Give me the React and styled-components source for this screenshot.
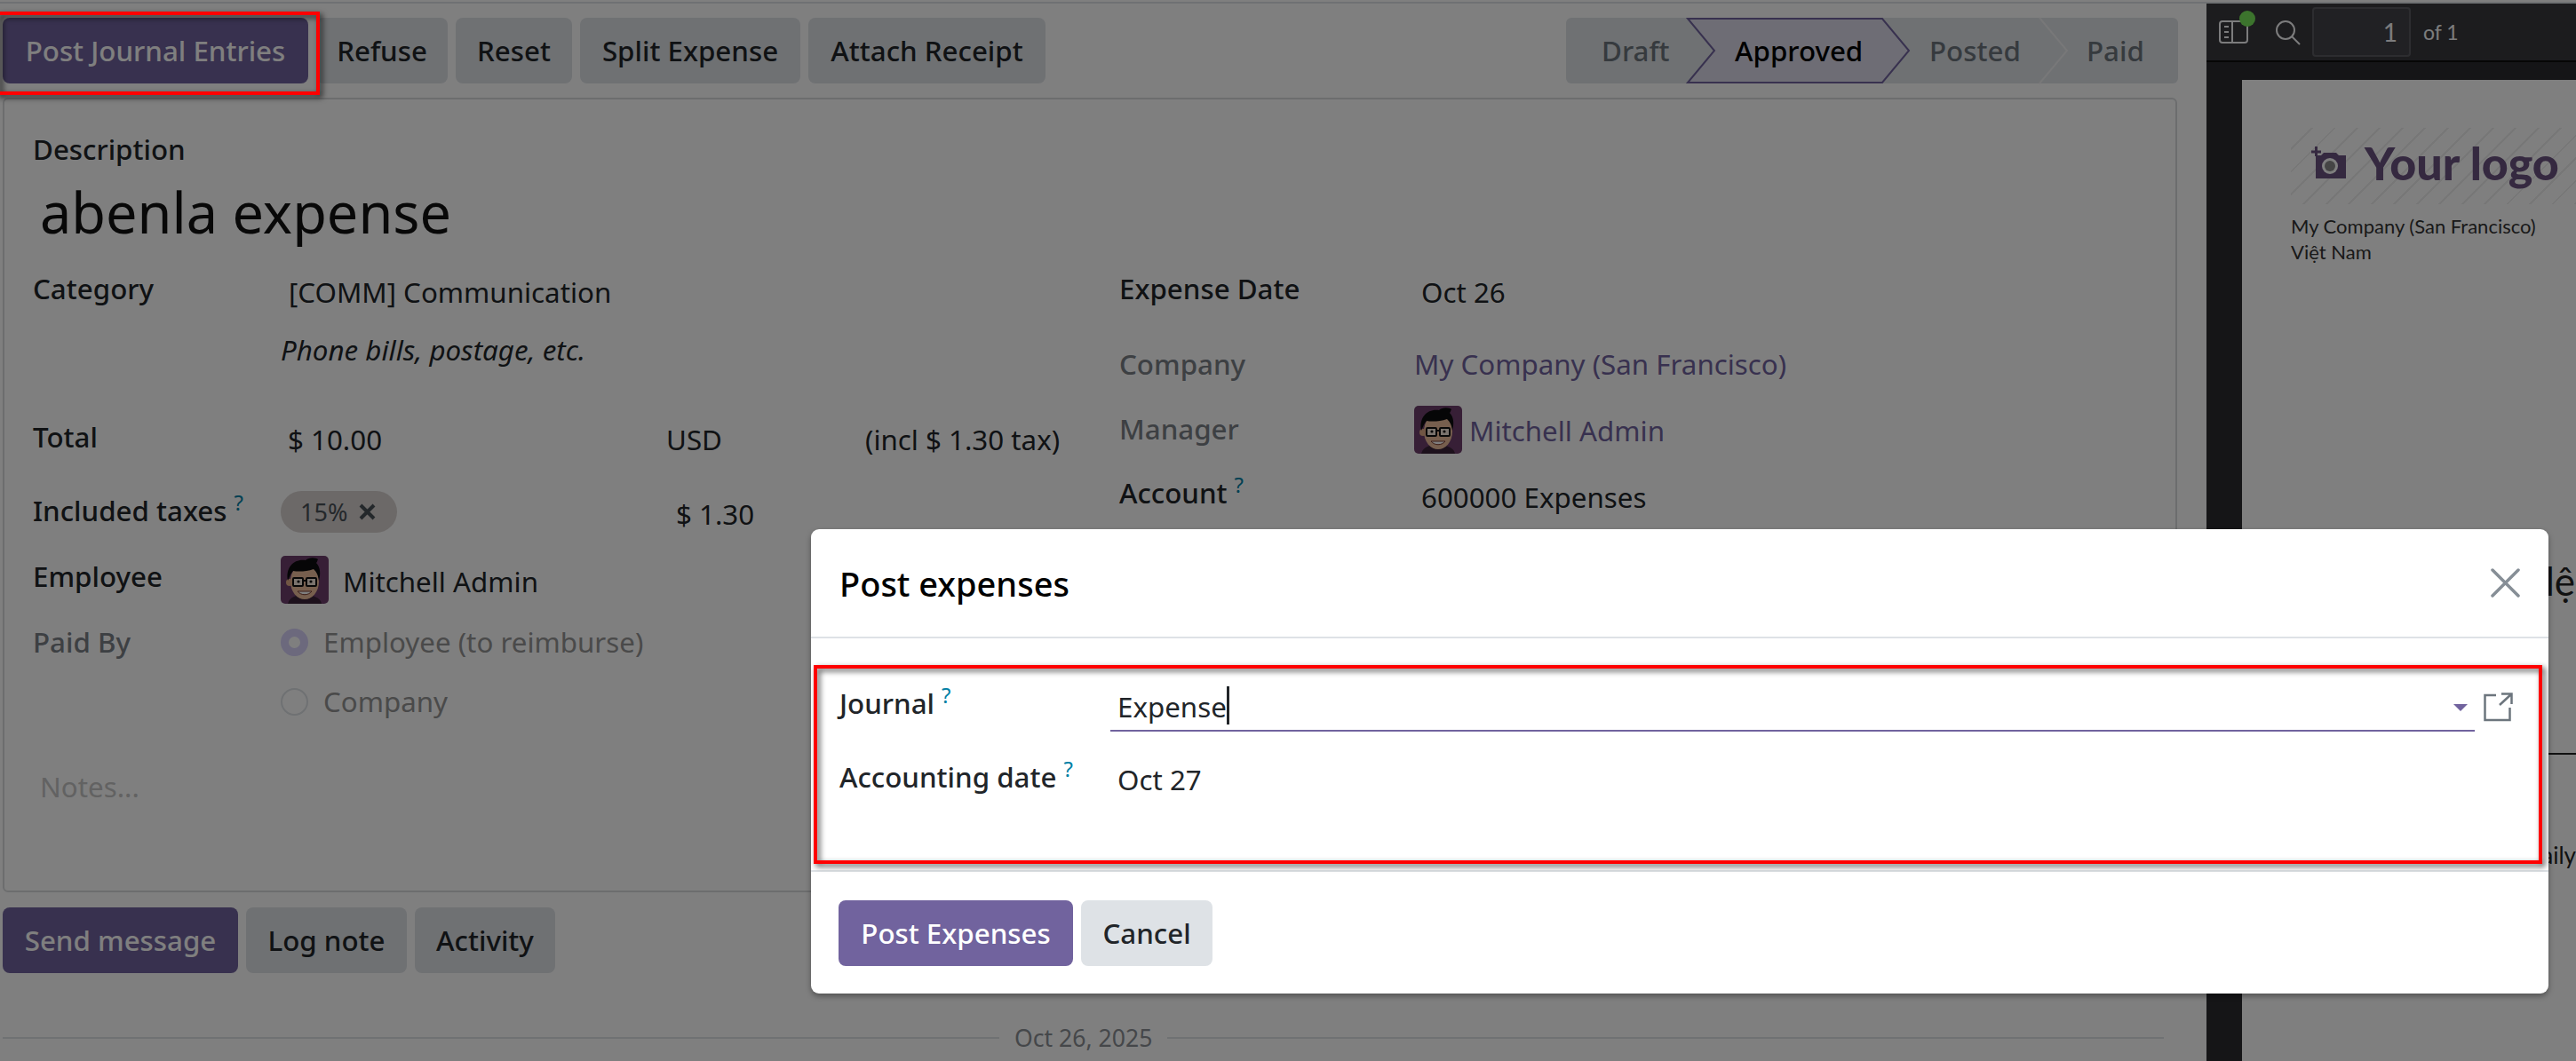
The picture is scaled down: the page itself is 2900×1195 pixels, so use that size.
import React from 'react';
import styled, { createGlobalStyle } from 'styled-components';

const GlobalStyle = createGlobalStyle`
    html, body {
        margin: 0;
        padding: 0;
        background: #fff;
    }
    * {
        box-sizing: border-box;
    }
`;

const Screen = styled.div`
    position: relative;
    width: 2900px;
    height: 1195px;
    overflow: hidden;
    background: #fff;
    color: #212529;
    font-family: 'Noto Sans', 'Open Sans', sans-serif;
    font-size: 31.3px;
    line-height: 36px;
`;

const TopRule = styled.div`
    height: 4px;
    border-bottom: 2px solid #dee2e6;
`;

const Columns = styled.div`
    display: grid;
    grid-template-columns: 2484px 416px;
    height: 1191px;
`;

const Main = styled.div`
    display: flex;
    flex-direction: column;
    padding-left: 3px;
    min-width: 0;
`;

const ControlBar = styled.div`
    display: flex;
    justify-content: space-between;
    padding: 16px 32px 0 0;
    height: 106px;
`;

const ButtonRow = styled.div`
    display: flex;
    gap: ${({ $gap }) => $gap || 9}px;
`;

const Button = styled.div`
    display: flex;
    align-items: center;
    justify-content: center;
    height: 74px;
    width: ${({ $w }) => $w}px;
    border-radius: 8px;
    white-space: nowrap;
    background: ${({ $primary }) => ($primary ? '#71639e' : '#dee2e6')};
    color: ${({ $primary }) => ($primary ? '#fff' : '#212529')};
    font-weight: 500;
`;

const StatusBar = styled.div`
    display: flex;
    height: 74px;
    border-radius: 6px;
    background: #dee2e6;
`;

const Step = styled.div`
    position: relative;
    display: flex;
    align-items: center;
    height: 74px;
    width: ${({ $w }) => $w}px;
    padding-left: ${({ $pad }) => $pad}px;
    color: ${({ $active }) => ($active ? '#000' : '#6c757d')};
    font-weight: 500;
    white-space: nowrap;

    span {
        position: relative;
    }
`;

const Chevron = styled.svg`
    position: absolute;
    top: 0;
    left: ${({ $left }) => $left}px;
    overflow: visible;
`;

const Sheet = styled.div`
    width: 2448px;
    height: 895px;
    border: 2px solid #d8dadd;
    border-radius: 6px;
    padding: 38px 0 0 32px;
`;

const FieldLabel = styled.div`
    font-weight: 500;
    color: ${({ $muted }) => ($muted ? '#7b8086' : '#212529')};
    white-space: nowrap;
`;

const Title = styled.div`
    margin: 17px 0 32px 8px;
    font-size: 63px;
    line-height: 72px;
    color: #111;
`;

const FormGrid = styled.div`
    display: grid;
    grid-template-columns: 1223px 1fr;
`;

const FieldRow = styled.div`
    display: grid;
    grid-template-columns: ${({ $col }) => $col || 279}px 1fr;
    height: ${({ $h }) => $h}px;
    align-items: start;
`;

const Value = styled.div`
    display: flex;
    align-items: center;
    padding-top: ${({ $top }) => ($top === undefined ? 5 : $top)}px;
    padding-left: ${({ $left }) => ($left === undefined ? 8 : $left)}px;
    color: ${({ $link }) => ($link ? '#71639e' : '#212529')};
    font-style: ${({ $italic }) => ($italic ? 'italic' : 'normal')};
    white-space: nowrap;
`;

const Amounts = styled.div`
    display: grid;
    grid-template-columns: ${({ $cols }) => $cols};
`;

const Help = styled.sup`
    position: relative;
    top: -1px;
    margin-left: 8px;
    font-size: 24px;
    font-weight: 400;
    line-height: 0;
    color: #0180a5;
    vertical-align: super;
`;

const Tag = styled.div`
    display: flex;
    align-items: center;
    gap: 13px;
    height: 47px;
    width: 131px;
    margin-top: -4px;
    padding-left: 22px;
    border-radius: 24px;
    background: #d8d2d0;
    color: #495057;
    font-size: 27px;
`;

const AvatarSlot = styled.div`
    display: flex;
    align-items: center;
    gap: ${({ $gap }) => $gap}px;
    margin-top: ${({ $top }) => $top}px;
    color: ${({ $link }) => ($link ? '#71639e' : '#212529')};
    white-space: nowrap;
`;

const AvatarName = styled.span`
    padding-top: ${({ $top }) => $top}px;
`;

const AvatarBox = styled.svg`
    display: block;
    flex: none;
    border-radius: 5px;
`;

const RadioLine = styled.div`
    display: flex;
    align-items: center;
    gap: 17px;
    color: #949494;
    white-space: nowrap;
`;

const Radio = styled.span`
    display: block;
    flex: none;
    width: 31px;
    height: 31px;
    border-radius: 50%;
    border: ${({ $on }) => ($on ? '9px solid #d8d2fa' : '2px solid #dee2e6')};
    background: #fff;
`;

const Notes = styled.div`
    padding-left: 8px;
    color: #c4c4c4;
`;

const ChatterBar = styled.div`
    padding-top: 17px;
`;

const DateLine = styled.div`
    display: flex;
    align-items: center;
    gap: 17px;
    width: 2433px;
    margin-top: 55px;
    color: #8a8f94;
    font-size: 26.6px;

    &::before,
    &::after {
        content: '';
        flex: 1;
        height: 2px;
        background: #dee2e6;
    }
    &::before {
        flex: none;
        width: 1122px;
    }
`;

const Viewer = styled.div`
    display: flex;
    flex-direction: column;
    background: #2a2a2e;
    overflow: hidden;
`;

const ViewerBar = styled.div`
    display: flex;
    align-items: center;
    height: 66px;
    padding-left: 14px;
    background: #38383d;
    border-bottom: 2px solid #0c0c0d;
    color: #f9f9fa;
`;

const IconSlot = styled.div`
    position: relative;
    display: flex;
    margin-right: ${({ $gap }) => $gap}px;
`;

const Dot = styled.span`
    position: absolute;
    top: -11px;
    right: -8px;
    width: 18px;
    height: 18px;
    border-radius: 50%;
    background: #78e85a;
`;

const PageInput = styled.div`
    width: 111px;
    height: 56px;
    margin-right: 14px;
    padding-right: 13px;
    border: 2px solid #5a5b60;
    border-radius: 4px;
    background: #434349;
    font-family: 'Lato', sans-serif;
    font-size: 28px;
    line-height: 52px;
    text-align: right;
`;

const PageCount = styled.div`
    font-family: 'Lato', sans-serif;
    font-size: 23px;
`;

const PdfPage = styled.div`
    flex: 1;
    margin: 20px 0 0 40px;
    padding-top: 54px;
    background: #fff;
    color: #222;
    font-family: 'Lato', 'Noto Sans', sans-serif;
`;

const LogoBlock = styled.div`
    display: flex;
    align-items: center;
    gap: 20px;
    height: 86px;
    margin-left: 55px;
    padding: 0 0 8px 23px;
    white-space: nowrap;
    background: repeating-linear-gradient(135deg, transparent 0 16px, #eeeeee 16px 18px);
`;

const LogoText = styled.span`
    color: #6b5280;
    font-size: 52px;
    font-weight: 900;
`;

const Address = styled.div`
    margin: 10px 0 0 55px;
    font-size: 22px;
    line-height: 29px;
    color: #333;
`;

const DocTitle = styled.div`
    margin-top: 329px;
    text-align: right;
    font-size: 44px;
    line-height: 54px;
    padding-right: 1px;
`;

const DocRule = styled.div`
    height: 2px;
    margin-top: 167px;
    background: #222;
`;

const DocLine = styled.div`
    margin-top: 97px;
    text-align: right;
    font-size: 26px;
    line-height: 32px;
`;

const Backdrop = styled.div`
    position: absolute;
    inset: 0;
    background: rgba(0, 0, 0, 0.5);
`;

const Highlight = styled.div`
    position: absolute;
    left: ${({ $x }) => $x}px;
    top: ${({ $y }) => $y}px;
    width: ${({ $w }) => $w}px;
    height: ${({ $h }) => $h}px;
    border: 4px solid #ff0000;
    filter: drop-shadow(3px 3px 3px rgba(0, 0, 0, 0.7));
`;

const Dialog = styled.div`
    position: absolute;
    left: 913px;
    top: 596px;
    width: 1956px;
    height: 523px;
    display: flex;
    flex-direction: column;
    border-radius: 9px;
    background: #fff;
    box-shadow: 0 3px 6px rgba(0, 0, 0, 0.35);
`;

const DialogHeader = styled.div`
    display: flex;
    align-items: center;
    justify-content: space-between;
    height: 123px;
    padding: 0 32px 0 32px;
    border-bottom: 2px solid #dee2e6;
`;

const DialogTitle = styled.div`
    font-size: 38px;
    color: #000;
    font-weight: 500;
`;

const DialogBody = styled.div`
    height: 263px;
    padding: 55px 0 0 32px;
    border-bottom: 2px solid #dee2e6;
`;

const DialogLabel = styled.div`
    font-weight: 500;
    color: #212529;
    white-space: nowrap;
`;

const JournalField = styled.div`
    display: flex;
    align-items: flex-start;
`;

const JournalInput = styled.div`
    position: relative;
    width: 1536px;
    height: 55px;
    margin-top: -5px;
    padding: 9px 0 0 8px;
    border-bottom: 2px solid #71639e;
`;

const Caret = styled.span`
    position: absolute;
    left: 131px;
    top: 4px;
    width: 3px;
    height: 43px;
    background: #212529;
`;

const DropArrow = styled.span`
    position: absolute;
    right: 8px;
    top: 24px;
    border-left: 8px solid transparent;
    border-right: 8px solid transparent;
    border-top: 8px solid #71639e;
`;

const ExternalLink = styled.svg`
    display: block;
    margin: 6px 0 0 10px;
`;

const DialogFooter = styled.div`
    display: flex;
    gap: 9px;
    padding: 32px 0 0 31px;
`;

function Avatar({ size }) {
    return (
        <AvatarBox width={size} height={size} viewBox="0 0 54 54">
            <rect width="54" height="54" fill="#6f3f6d" />
            <path d="M8 54c2-8 10-10 19-10s18 3 19 10z" fill="#3b2338" />
            <ellipse cx="27" cy="29" rx="16" ry="20" fill="#eebf9d" />
            <circle cx="10" cy="30" r="4" fill="#e2ac88" />
            <path d="M8 28C5 12 16 3 28 5c4-4 12-3 14-1-1 2-1 3-2 4 5 5 5 13 3 20-1-7-3-10-6-13-8 3-18 3-23 2-3 3-4 7-6 11z" fill="#0d0d0f" />
            <rect x="14" y="25" width="11" height="9" rx="1" fill="#f7e9dd" stroke="#111" strokeWidth="2" />
            <rect x="29" y="25" width="11" height="9" rx="1" fill="#f7e9dd" stroke="#111" strokeWidth="2" />
            <path d="M25 28h4" stroke="#111" strokeWidth="2" />
            <circle cx="20" cy="29" r="1.6" fill="#111" />
            <circle cx="34" cy="29" r="1.6" fill="#111" />
            <path d="M19 40c4 5 12 5 16 0z" fill="#fff" stroke="#7a3b2e" strokeWidth="1" />
        </AvatarBox>
    );
}

function CloseIcon() {
    return (
        <svg width="33" height="33" viewBox="0 0 33 33">
            <path d="M2 2l29 29M31 2L2 31" stroke="#868e96" strokeWidth="3.500" strokeLinecap="round" fill="none" />
        </svg>
    );
}

function TagRemove() {
    return (
        <svg width="19" height="19" viewBox="0 0 19 19">
            <path d="M2 2l15 15M17 2L2 17" stroke="#495057" strokeWidth="4" fill="none" />
        </svg>
    );
}

function LogoCamera() {
    return (
        <svg width="40" height="36" viewBox="0 0 40 36">
            <path d="M5 10h6l3-3h14l3 3h8v26H5z" fill="#6b5280" />
            <circle cx="21" cy="22" r="9" fill="#fff" />
            <circle cx="21" cy="22" r="6" fill="#8a8a8a" />
            <path d="M0 6h11M5.500 0v11" stroke="#6b5280" strokeWidth="3" />
        </svg>
    );
}

export default function App() {
    return (
        <Screen>
            <GlobalStyle />
            <TopRule />
            <Columns>
                <Main>
                    <ControlBar>
                        <ButtonRow>
                            <Button $primary $w={344}>Post Journal Entries</Button>
                            <Button $w={148}>Refuse</Button>
                            <Button $w={131}>Reset</Button>
                            <Button $w={248}>Split Expense</Button>
                            <Button $w={267}>Attach Receipt</Button>
                        </ButtonRow>
                        <StatusBar>
                            <Step $w={136} $pad={40}><span>Draft</span></Step>
                            <Step $w={220} $pad={54} $active>
                                <Chevron width="251" height="74" $left={0}>
                                    <path d="M1 1H220L250 37L220 73H1L31 37Z" fill="#dddbea" stroke="#71639e" strokeWidth="2" />
                                </Chevron>
                                <span>Approved</span>
                            </Step>
                            <Step $w={177} $pad={53}>
                                <span>Posted</span>
                                <Chevron width="32" height="74" $left={177}>
                                    <path d="M0 0L31 37L0 74" fill="none" stroke="#f0f0f2" strokeWidth="2" />
                                </Chevron>
                            </Step>
                            <Step $w={156} $pad={53}><span>Paid</span></Step>
                        </StatusBar>
                    </ControlBar>
                    <Sheet>
                        <FieldLabel>Description</FieldLabel>
                        <Title>abenla expense</Title>
                        <FormGrid>
                            <div>
                                <FieldRow $h={69}>
                                    <FieldLabel>Category</FieldLabel>
                                    <Value $top={4} $left={9}>[COMM] Communication</Value>
                                </FieldRow>
                                <FieldRow $h={98}>
                                    <span />
                                    <Value $italic $top={0} $left={0}>Phone bills, postage, etc.</Value>
                                </FieldRow>
                                <FieldRow $h={83}>
                                    <FieldLabel>Total</FieldLabel>
                                    <Amounts $cols="426px 224px 1fr">
                                        <Value $top={3}>$ 10.00</Value>
                                        <Value $top={3}>USD</Value>
                                        <Value $top={3}>(incl $ 1.30 tax)</Value>
                                    </Amounts>
                                </FieldRow>
                                <FieldRow $h={74}>
                                    <FieldLabel>Included taxes<Help>?</Help></FieldLabel>
                                    <Amounts $cols="426px 1fr">
                                        <Tag>15% <TagRemove /></Tag>
                                        <Value $top={0} $left={19}>$ 1.30</Value>
                                    </Amounts>
                                </FieldRow>
                                <FieldRow $h={74}>
                                    <FieldLabel>Employee</FieldLabel>
                                    <AvatarSlot $gap={16} $top={-5}>
                                        <Avatar size={54} />
                                        <AvatarName $top={4}>Mitchell Admin</AvatarName>
                                    </AvatarSlot>
                                </FieldRow>
                                <FieldRow $h={67}>
                                    <FieldLabel $muted>Paid By</FieldLabel>
                                    <RadioLine><Radio $on />Employee (to reimburse)</RadioLine>
                                </FieldRow>
                                <FieldRow $h={96}>
                                    <span />
                                    <RadioLine><Radio />Company</RadioLine>
                                </FieldRow>
                                <Notes>Notes...</Notes>
                            </div>
                            <div>
                                <FieldRow $h={85} $col={332}>
                                    <FieldLabel>Expense Date</FieldLabel>
                                    <Value $top={4}>Oct 26</Value>
                                </FieldRow>
                                <FieldRow $h={73} $col={332}>
                                    <FieldLabel $muted>Company</FieldLabel>
                                    <Value $top={0} $left={0} $link>My Company (San Francisco)</Value>
                                </FieldRow>
                                <FieldRow $h={72} $col={332}>
                                    <FieldLabel $muted>Manager</FieldLabel>
                                    <AvatarSlot $gap={8} $top={-8} $link>
                                        <Avatar size={54} />
                                        <AvatarName $top={2}>Mitchell Admin</AvatarName>
                                    </AvatarSlot>
                                </FieldRow>
                                <FieldRow $h={60} $col={332}>
                                    <FieldLabel>Account<Help>?</Help></FieldLabel>
                                    <Value $top={5}>600000 Expenses</Value>
                                </FieldRow>
                            </div>
                        </FormGrid>
                    </Sheet>
                    <ChatterBar>
                        <ButtonRow>
                            <Button $primary $w={265}>Send message</Button>
                            <Button $w={181}>Log note</Button>
                            <Button $w={158}>Activity</Button>
                        </ButtonRow>
                    </ChatterBar>
                    <DateLine>Oct 26, 2025</DateLine>
                </Main>
                <Viewer>
                    <ViewerBar>
                        <IconSlot $gap={30}>
                            <svg width="33" height="26" viewBox="0 0 33 26" fill="none" stroke="#f9f9fa" strokeWidth="2">
                                <rect x="1" y="1" width="31" height="24" rx="3" />
                                <path d="M15 1v24M6 7h5M6 13h5M6 19h5" />
                            </svg>
                            <Dot />
                        </IconSlot>
                        <IconSlot $gap={13}>
                            <svg width="29" height="29" viewBox="0 0 29 29" fill="none" stroke="#f9f9fa" strokeWidth="2">
                                <circle cx="12" cy="12" r="10" />
                                <path d="M19 19l9 9" />
                            </svg>
                        </IconSlot>
                        <PageInput>1</PageInput>
                        <PageCount>of 1</PageCount>
                    </ViewerBar>
                    <PdfPage>
                        <LogoBlock>
                            <LogoCamera />
                            <LogoText>Your logo</LogoText>
                        </LogoBlock>
                        <Address>
                            My Company (San Francisco)
                            <br />
                            Việt Nam
                        </Address>
                        <DocTitle>lệ</DocTitle>
                        <DocRule />
                        <DocLine>Daily</DocLine>
                    </PdfPage>
                </Viewer>
            </Columns>
            <Backdrop />
            <Highlight $x={-4} $y={13} $w={364} $h={94} />
            <Dialog>
                <DialogHeader>
                    <DialogTitle>Post expenses</DialogTitle>
                    <CloseIcon />
                </DialogHeader>
                <DialogBody>
                    <FieldRow $h={83} $col={305}>
                        <DialogLabel>Journal<Help>?</Help></DialogLabel>
                        <JournalField>
                            <JournalInput>
                                Expense
                                <Caret />
                                <DropArrow />
                            </JournalInput>
                            <ExternalLink width="33" height="33" viewBox="0 0 33 33" fill="none" stroke="#6c757d" strokeWidth="2.500">
                                <path d="M14 3H1.500v28h28V17" />
                                <path d="M18 14L31 2M20 1.500h11.500V13" />
                            </ExternalLink>
                        </JournalField>
                    </FieldRow>
                    <FieldRow $h={60} $col={305}>
                        <DialogLabel>Accounting date<Help>?</Help></DialogLabel>
                        <Value $top={3}>Oct 27</Value>
                    </FieldRow>
                </DialogBody>
                <DialogFooter>
                    <Button $primary $w={264}>Post Expenses</Button>
                    <Button $w={148}>Cancel</Button>
                </DialogFooter>
            </Dialog>
            <Highlight $x={916} $y={749} $w={1946} $h={224} />
        </Screen>
    );
}
